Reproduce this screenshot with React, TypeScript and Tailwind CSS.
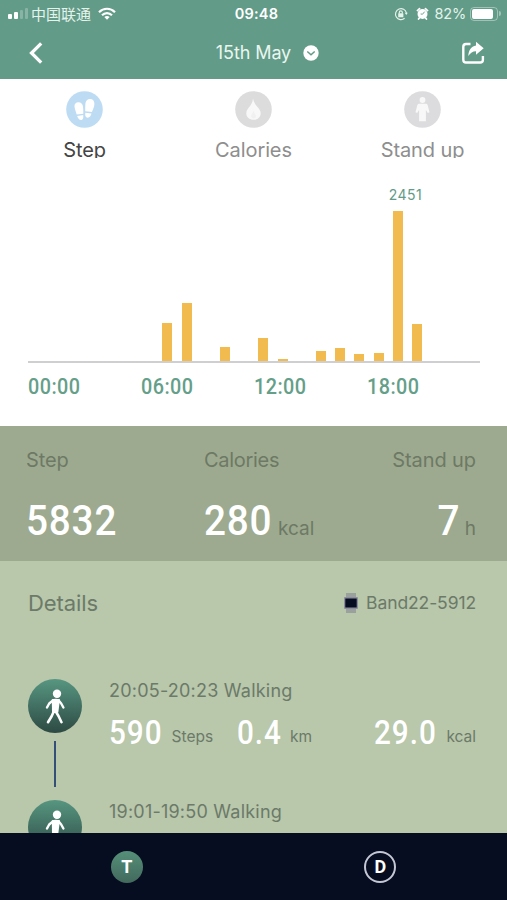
import React, { useState } from 'react';

const hourlySteps = [0, 0, 0, 0, 0, 0, 0, 38, 58, 0, 14, 0, 23, 2, 0, 10, 13, 7, 8, 150, 37, 0, 0, 0];

const activities = [
    { time: '20:05-20:23 Walking', steps: '590', km: '0.4', kcal: '29.0' },
    { time: '19:01-19:50 Walking', steps: '', km: '', kcal: '' },
];

function StepIcon() {
    return (
        <svg viewBox="0 0 37 37" className="w-[37px] h-[37px]">
            <circle cx="18.5" cy="18.5" r="18.3" fill="#bddcf3" />
            <g fill="#fff">
                <path d="M8.500 15.500c-.2-2.600 1.400-4.300 3.900-4.300 2.700 0 4.200 1.700 4.600 4.300.3 2.600.3 5.200.3 7.300l-6.600.8c-.7-2.700-2-5.300-2.200-8.100z" />
                <path d="M11.200 25l6-.9c.3 2.600-.1 5-2 5-2.200 0-3.400-1.900-4-4.100z" />
                <path d="M28.400 13c.1-2.900-1.700-4.900-4.300-4.900-2.700 0-4.400 1.800-4.700 4.500-.2 2.700-.2 5.200-.2 7.600l6.700.8c.9-2.500 2.400-4.900 2.500-8z" />
                <path d="M25.500 22.600l-6.200-.8c-.3 2.700.2 4.900 2.400 4.900 2 0 3.200-1.900 3.800-4.100z" />
            </g>
        </svg>
    );
}

function CaloriesIcon() {
    return (
        <svg viewBox="0 0 37 37" className="w-[37px] h-[37px]">
            <circle cx="18.5" cy="18.5" r="18.3" fill="#dcdcdc" />
            <path d="M18 7.500c1 4.500 3 6.500 5 9 1.700 2.100 2.700 3.700 2.700 5.700 0 3.900-3.200 6.600-7.200 6.600s-7.200-2.700-7.200-6.600c0-2.100 1-3.600 2.500-5.600 2-2.600 4-5.100 4.200-9.100z" fill="#f8f8f8" />
            <path d="M18.500 20c.3 1.800 2.400 3 2.400 5 0 1.600-1 2.500-2.400 2.500s-2.400-.9-2.400-2.500c0-2 2.100-3.200 2.400-5z" fill="#f1f1f1" />
        </svg>
    );
}

function StandIcon() {
    return (
        <svg viewBox="0 0 37 37" className="w-[37px] h-[37px]">
            <circle cx="18.5" cy="18.5" r="18.3" fill="#dcdcde" />
            <circle cx="18.500" cy="9" r="2.900" fill="#f8f8f8" />
            <path d="M15.300 12.700h6.400c1.200 0 1.800.6 2.100 1.700l1.700 6.800-1.700.9-1.900-3.200v11.300h-6.800V18.900l-1.900 3.200-1.700-.9 1.700-6.800c.3-1.100.9-1.700 2.100-1.700z" fill="#f8f8f8" />
        </svg>
    );
}

function WalkingIcon() {
    return (
        <svg viewBox="0 0 54 54" className="w-[54px] h-[54px] shrink-0">
            <defs>
                <linearGradient id="walkBg" x1="0" y1="0" x2="0" y2="1">
                    <stop offset="0" stopColor="#579681" />
                    <stop offset="1" stopColor="#2d4a43" />
                </linearGradient>
            </defs>
            <circle cx="27" cy="27" r="27" fill="url(#walkBg)" />
            <circle cx="29" cy="14.700" r="4.200" fill="#fff" />
            <g stroke="#fff" strokeLinecap="round" strokeLinejoin="round" fill="none">
                <path d="M25 21.300L21.200 24.500l-2.200 4M30.500 21.300l2.700 3.200 2.200 4" strokeWidth="2.400" />
                <path d="M26 32l-2.500 5.500-3.500 5.700M27.500 32l3 5 3 6.200" strokeWidth="2.600" />
            </g>
            <path d="M23.800 20.300c2.200-.8 5.800-.8 8.200 0L30.300 33.500h-6.300z" fill="#fff" />
        </svg>
    );
}

const tabs = [
    { name: 'Step', icon: <StepIcon /> },
    { name: 'Calories', icon: <CaloriesIcon /> },
    { name: 'Stand up', icon: <StandIcon /> },
];

function StatusBar() {
    return (
        <div className="grid grid-cols-3 items-center h-[27px] pl-2 pr-[6px] text-[#e4f3ec]">
            <div className="flex items-center">
                <div className="flex items-end gap-[2px] mr-[3px] h-[11px]">
                    <div className="w-[4px] h-[5px] rounded-[1px] bg-white"></div>
                    <div className="w-[4px] h-[7px] rounded-[1px] bg-white"></div>
                    <div className="w-[3px] h-[9px] rounded-[1px] bg-white/25"></div>
                    <div className="w-[3px] h-[11px] rounded-[1px] bg-white/25"></div>
                </div>
                <span className="font-['Noto_Sans_CJK_SC',sans-serif] text-[15px] leading-none whitespace-nowrap -mt-px">中国联通</span>
                <svg viewBox="0 0 18 13" className="w-[18px] h-[13px] ml-[7px] -mt-px" fill="none" stroke="#fff" strokeWidth="2.200">
                    <path d="M1 5.200c4.600-4.600 11.400-4.600 16 0" />
                    <path d="M4 8.200c2.900-2.900 7.100-2.900 10 0" />
                    <path d="M9 12.800L6.300 10c1.600-1.500 3.800-1.500 5.400 0z" fill="#fff" stroke="none" />
                </svg>
            </div>
            <div className="text-center text-[14.500px] font-semibold tracking-[0.2px] text-white pl-[4px] pt-px">09:48</div>
            <div className="flex items-center justify-end">
                <svg viewBox="0 0 14 14" className="w-[14px] h-[14px]" fill="none" stroke="currentColor" strokeWidth="1.200">
                    <path d="M10.600 11.300A5.500 5.500 0 1 1 12.400 6" />
                    <path d="M10.600 5.800h3.200l-1.500 2.300z" fill="currentColor" stroke="none" />
                    <rect x="4.200" y="6.300" width="5.200" height="4" rx=".5" fill="currentColor" stroke="none" />
                    <path d="M5.300 6.500V5.300c0-2 3-2 3 0v1.200" />
                </svg>
                <svg viewBox="0 0 14 14" className="w-[13px] h-[13px] ml-[8px]">
                    <circle cx="7" cy="7.500" r="5.400" fill="#fff" />
                    <path d="M1.500 3.800l2.300-2M10.200 1.800l2.300 2M3.500 12l-.8 1M10.500 12l.8 1" stroke="#fff" strokeWidth="1.800" strokeLinecap="round" />
                    <path d="M9.300 5L7 7.800 5 7.500" stroke="#629b87" strokeWidth="1" fill="none" />
                </svg>
                <span className="ml-[6px] text-[14.500px] tracking-[-0.2px]">82%</span>
                <div className="ml-[4px] w-[28px] h-[14px] rounded-[4px] border border-white/40 p-[1px]">
                    <div className="w-[21px] h-[10px] rounded-[2px] bg-white"></div>
                </div>
                <div className="ml-[1px] w-[2px] h-[5px] rounded-r bg-white/40"></div>
            </div>
        </div>
    );
}

function ActivityValue({ value, unit }: { value: string; unit: string }) {
    return (
        <div className="flex items-baseline leading-[40px]">
            <span className="origin-left scale-x-90 -mr-[5px] font-['Roboto',sans-serif] font-medium text-[33px] tracking-[1.100px] text-white">{value}</span>
            <span className="ml-[8px] pb-[2px] -translate-y-[2px] text-[15.500px]">{unit}</span>
        </div>
    );
}

export default function App() {
    const [activeTab, setActiveTab] = useState('Step');

    return (
        <div className="w-[507px] h-[900px] overflow-hidden flex flex-col bg-white font-['Inter',sans-serif]">
            {/* Header */}
            <header className="h-[79px] shrink-0 bg-[#629b87]">
                <StatusBar />
                <div className="flex items-center justify-between h-[51px] pl-[28px] pr-[22px]">
                    <svg viewBox="0 0 16 22" className="w-[16px] h-[22px]" fill="none" stroke="#fff" strokeWidth="3.300">
                        <path d="M13.200 1.300L3.500 11l9.700 9.700" />
                    </svg>
                    <div className="flex items-center gap-3 ml-[30px]">
                        <span className="text-[18px] tracking-[-0.1px] text-[#e9f6f0]">15th May</span>
                        <svg viewBox="0 0 16 16" className="w-[16px] h-[16px]">
                            <circle cx="8" cy="8" r="7.700" fill="#fff" />
                            <path d="M4.300 6.500L8 9.800l3.700-3.300" fill="none" stroke="#629b87" strokeWidth="1.500" />
                        </svg>
                    </div>
                    <svg viewBox="0 0 24 24" className="w-[24px] h-[24px]">
                        <path d="M9.500 3H5Q2.300 3 2.300 5.700v13.100q0 2.700 2.700 2.700h14.200q2.700 0 2.700-2.700V15" fill="none" stroke="#fff" strokeWidth="2.400" />
                        <path d="M15 .8l7.700 6.500L15 13.800v-3.600c-3.500 0-5.500 1.800-7.700 4.900.2-5.500 2.700-9.900 7.700-10.600z" fill="#fff" />
                    </svg>
                </div>
            </header>

            {/* Tabs */}
            <div className="grid grid-cols-3 h-[79px] shrink-0 pt-[12px] overflow-hidden">
                {tabs.map((tab) => (
                    <button key={tab.name} onClick={() => setActiveTab(tab.name)} className="flex flex-col items-center">
                        {tab.icon}
                        <span className={`mt-[8px] text-[20px] leading-[28px] tracking-[-0.1px] ${activeTab === tab.name ? 'text-[#444444]' : 'text-[#8e8e8e]'}`}>
                            {tab.name}
                        </span>
                    </button>
                ))}
            </div>

            {/* Hourly chart */}
            <div className="h-[268px] shrink-0 pl-[28px] pt-[25px] pr-[27px]">
                <div className="h-[180px] flex items-end justify-between border-b-2 border-[#cfcfd1]">
                    {hourlySteps.map((height, hour) => (
                        <div key={hour} className="relative w-[10px] bg-[#f1bb50]" style={{ height: `${height}px` }}>
                            {hour === 19 && (
                                <span className="absolute bottom-full left-[-4px] mb-[6px] text-[14px] leading-[20px] tracking-[0.4px] text-[#629b87]">2451</span>
                            )}
                        </div>
                    ))}
                </div>
                <div className="grid grid-cols-4 pt-[9px] font-['Roboto',sans-serif] font-medium text-[22px] leading-[30px] tracking-[0.5px] text-[#659f8a]">
                    <span className="origin-left scale-x-90">00:00</span>
                    <span className="origin-left scale-x-90">06:00</span>
                    <span className="origin-left scale-x-90">12:00</span>
                    <span className="origin-left scale-x-90">18:00</span>
                </div>
            </div>

            {/* Totals */}
            <div className="flex h-[135px] shrink-0 pt-[20px] pl-[26px] pr-[31px] bg-[#9daa8f] text-[#6d7965]">
                <div className="w-[178px]">
                    <div className="text-[20px] leading-[28px] tracking-[-0.1px]">Step</div>
                    <div className="mt-[21px] origin-left scale-x-90 font-['Roboto',sans-serif] font-medium text-[43px] leading-[50px] tracking-[0.9px] text-white">5832</div>
                </div>
                <div>
                    <div className="text-[20px] leading-[28px] tracking-[-0.3px]">Calories</div>
                    <div className="mt-[21px] flex items-baseline leading-[50px]">
                        <span className="origin-left scale-x-90 -mr-[8px] font-['Roboto',sans-serif] font-medium text-[43px] tracking-[0.9px] text-white">280</span>
                        <span className="ml-[6px] text-[19px]">kcal</span>
                    </div>
                </div>
                <div className="ml-auto text-right">
                    <div className="text-[20px] leading-[28px] tracking-[-0.1px]">Stand up</div>
                    <div className="mt-[21px] flex items-baseline justify-end leading-[50px]">
                        <span className="origin-right scale-x-90 font-['Roboto',sans-serif] font-medium text-[43px] text-white">7</span>
                        <span className="ml-[5px] text-[19px]">h</span>
                    </div>
                </div>
            </div>

            {/* Details */}
            <div className="h-[272px] shrink-0 overflow-hidden pl-[28px] pr-[31px] bg-[#b9c7ab] text-[#6b7a69]">
                <div className="flex items-center justify-between h-[84px]">
                    <h2 className="text-[22px] tracking-[-0.1px]">Details</h2>
                    <div className="flex items-center gap-2">
                        <svg viewBox="0 0 14 20" className="w-[14px] h-[20px]">
                            <rect x="2" width="10" height="20" fill="#9aa19d" />
                            <rect y="4" width="14" height="12" rx="1" fill="#8b8d9c" />
                            <rect x="1.300" y="5.500" width="11.400" height="9" fill="#070d20" />
                        </svg>
                        <span className="text-[17.500px] tracking-[-0.1px]">Band22-5912</span>
                    </div>
                </div>
                <div className="pt-[34px]">
                    {activities.map((activity) => (
                        <div key={activity.time} className="flex h-[121px]">
                            <div className="flex flex-col items-center w-[54px]">
                                <WalkingIcon />
                                <div className="w-[2px] h-[46px] mt-[8px] bg-[#344f78]"></div>
                            </div>
                            <div className="flex-1 ml-[27px]">
                                <div className="text-[18px] leading-[24px] tracking-[0.22px]">{activity.time}</div>
                                {activity.steps && (
                                    <div className="flex items-baseline mt-[10px]">
                                        <div className="w-[128px]">
                                            <ActivityValue value={activity.steps} unit="Steps" />
                                        </div>
                                        <ActivityValue value={activity.km} unit="km" />
                                        <div className="ml-auto">
                                            <ActivityValue value={activity.kcal} unit="kcal" />
                                        </div>
                                    </div>
                                )}
                            </div>
                        </div>
                    ))}
                </div>
            </div>

            {/* Bottom nav */}
            <nav className="grid grid-cols-2 h-[67px] shrink-0 justify-items-center items-center bg-[#070d20] text-white font-['Roboto',sans-serif] font-bold text-[18px]">
                <button className="flex items-center justify-center w-[32px] h-[32px] rounded-full bg-linear-to-b from-[#559079] to-[#42695d]">T</button>
                <button className="flex items-center justify-center w-[32px] h-[32px] rounded-full border-2 border-[#c4c8d4]">D</button>
            </nav>
        </div>
    );
}
